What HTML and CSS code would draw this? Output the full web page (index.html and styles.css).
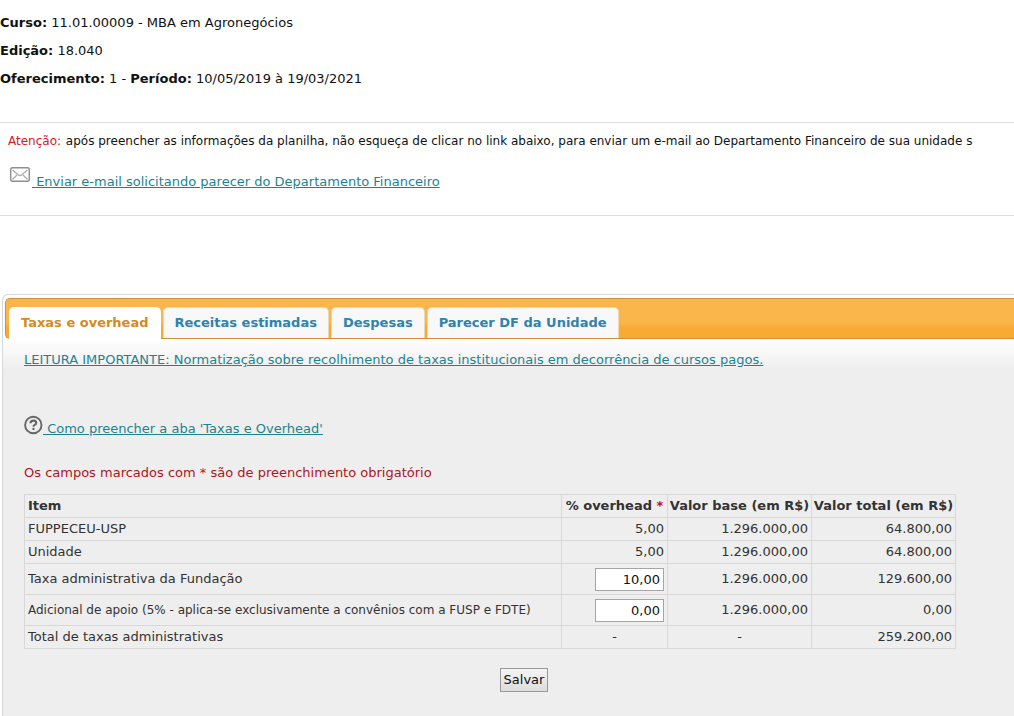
FILE: index.html
```html
<!DOCTYPE html>
<html lang="pt-BR">
<head>
<meta charset="utf-8">
<title>MBA em Agronegócios</title>
<link rel="stylesheet" href="styles.css">
</head>
<body>
<header class="course">
  <p><strong>Curso:</strong> 11.01.00009 - MBA em Agronegócios</p>
  <p><strong>Edição:</strong> 18.040</p>
  <p><strong>Oferecimento:</strong> 1 - <strong>Período:</strong> 10/05/2019 à 19/03/2021</p>
</header>
<section class="notice">
  <p class="compact"><span class="alert">Atenção:</span> após preencher as informações da planilha, não esqueça de clicar no link abaixo, para enviar um e-mail ao Departamento Financeiro de sua unidade s</p>
  <a class="mail" href="#"><svg class="icon" width="24" height="20" viewBox="0 0 24 20" fill="none" stroke="#8f8f8f"><rect x="2.7" y="2.7" width="18.6" height="13.6" rx="2" stroke-width="1.4"/><path d="M4.5 5l6 5q1.500 1 3 0l6-5M4.500 14.500l4.500-4.500M19.500 14.500l-4.500-4.500" stroke="#ababab" stroke-width="1.300"/></svg><span>&nbsp;Enviar e-mail solicitando parecer do Departamento Financeiro</span></a>
</section>
<main class="tabs">
  <nav class="tab-bar">
    <a class="tab active" href="#taxas">Taxas e overhead</a>
    <a class="tab" href="#receitas">Receitas estimadas</a>
    <a class="tab" href="#despesas">Despesas</a>
    <a class="tab" href="#parecer">Parecer DF da Unidade</a>
  </nav>
  <section class="panel" id="taxas">
    <a class="reading" href="#">LEITURA IMPORTANTE: Normatização sobre recolhimento de taxas institucionais em decorrência de cursos pagos.</a>
    <a class="help" href="#"><svg class="icon" width="19" height="20" viewBox="0 0 19 20" fill="none" stroke="#666"><circle cx="9.300" cy="10" r="8.200" stroke-width="1.900"/><path d="M6.500 8.300q0-2.700 2.900-2.700 2.800 0 2.800 2.300 0 1.300-1.500 2-1.200.6-1.200 1.800" stroke-width="2.100"/><circle cx="9.500" cy="13.900" r="1.200" fill="#666" stroke="none"/></svg><span>&nbsp;Como preencher a aba 'Taxas e Overhead'</span></a>
    <p class="required">Os campos marcados com * são de preenchimento obrigatório</p>
    <form class="form">
      <table class="fees">
        <colgroup><col class="col-item"><col class="col-rate"><col class="col-value"><col class="col-value"></colgroup>
        <thead>
          <tr><th>Item</th><th>% overhead <span class="star">*</span></th><th>Valor base (em R$)</th><th>Valor total (em R$)</th></tr>
        </thead>
        <tbody>
          <tr><td>FUPPECEU-USP</td><td class="num">5,00</td><td class="num">1.296.000,00</td><td class="num">64.800,00</td></tr>
          <tr><td>Unidade</td><td class="num">5,00</td><td class="num">1.296.000,00</td><td class="num">64.800,00</td></tr>
          <tr class="editable"><td><label for="taxa">Taxa administrativa da Fundação</label></td><td class="num"><input id="taxa" type="text" value="10,00"></td><td class="num">1.296.000,00</td><td class="num">129.600,00</td></tr>
          <tr class="editable"><td><label class="compact" for="apoio">Adicional de apoio (5% - aplica-se exclusivamente a convênios com a FUSP e FDTE)</label></td><td class="num"><input id="apoio" type="text" value="0,00"></td><td class="num">1.296.000,00</td><td class="num">0,00</td></tr>
          <tr><td>Total de taxas administrativas</td><td class="none">-</td><td class="none">-</td><td class="num">259.200,00</td></tr>
        </tbody>
      </table>
      <button class="save" type="button">Salvar</button>
    </form>
  </section>
</main>
</body>
</html>
```
FILE: styles.css
```css
* { box-sizing: border-box; }
html { min-height: 100%; display: flex; }
body {
  margin: 0;
  flex: 1;
  min-width: 0;
  display: flex;
  flex-direction: column;
  font: 13px/18px Verdana, "DejaVu Sans", sans-serif;
  color: #111;
  background: #fff;
  overflow: hidden;
}
p { margin: 0; }
a { color: #1b8490; }
.compact { font-size: 12px; }
.course { display: grid; gap: 10px; padding: 14px 0 34px; }
.notice {
  border: solid #ddd;
  border-width: 1px 0;
  padding: 9px 8px 24px;
  white-space: nowrap;
}
.notice p { margin-bottom: 15px; }
.alert { color: #d8171f; margin-right: 1px; }
.mail, .help { display: flex; align-items: flex-start; width: fit-content; text-decoration: none; }
.mail span, .help span { text-decoration: underline; }
.mail span { padding-top: 8px; }
.help span { padding-top: 5px; }
.tabs {
  flex: 1;
  display: flex;
  flex-direction: column;
  margin: 78px 0 0 2px;
  padding: 3px 0 0 2px;
  border: solid #d4d8da;
  border-width: 1px 0 0 1px;
  border-radius: 6px 0 0 0;
  background: linear-gradient(#fff 44px, #eee 74px);
}
.tab-bar {
  display: flex;
  gap: 2px;
  height: 41px;
  padding: 8px 0 0 3px;
  border: 1px solid #d29036;
  border-right: 0;
  border-radius: 5px 0 0 5px;
  background: linear-gradient(#fab64b 60%, #f9aa32 75%);
}
.tab {
  padding: 6px 11px;
  border: 1px solid #f0d7ad;
  border-bottom: 0;
  border-radius: 5px 5px 0 0;
  background: #f8f8f8;
  color: #2e83ad;
  font-weight: bold;
  text-decoration: none;
  white-space: nowrap;
}
.tab.active { background: #fff; color: #d58b1c; border-color: #fff; margin-bottom: -1px; }
.panel { padding: 12px 19px 24px; color: #333; }
.reading { display: block; width: fit-content; }
.help { margin-top: 46px; }
.required { margin: 26px 0 12px; color: #b3121d; }
.form { display: flex; flex-direction: column; width: 932px; max-width: 100%; }
.fees { width: 100%; border-collapse: collapse; table-layout: fixed; }
.col-rate { width: 106px; }
.col-value { width: 144px; }
.fees th, .fees td { border: 1px solid #d8d8d8; padding: 2px 3px; text-align: left; white-space: nowrap; }
.fees th + th { padding: 2px 0; text-align: center; }
.fees .num { text-align: right; }
.fees .none { text-align: center; }
.editable td { height: 31px; }
.editable td:has(input) { padding-top: 0; padding-bottom: 0; }
.star { color: #b3121d; }
.fees input {
  display: block;
  width: 69px;
  height: 23px;
  margin-left: auto;
  padding: 1px 3px;
  border: 1px solid #a5a5a5;
  background: #fff;
  color: #111;
  font: inherit;
  text-align: right;
}
.save {
  align-self: center;
  margin: 19px 0 0 68px;
  padding: 2px 3px;
  border: 1px solid #999;
  background: linear-gradient(#f5f5f5, #ddd);
  color: #111;
  font: inherit;
}
```
